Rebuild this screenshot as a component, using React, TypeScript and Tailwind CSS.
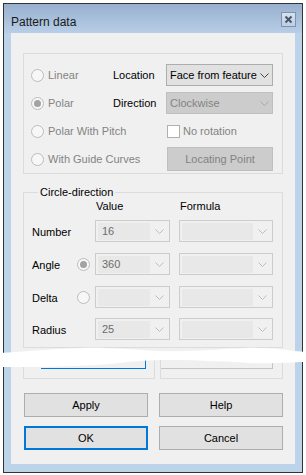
import React from "react";

function Chevron({ color = "#bdbdbd" }: { color?: string }) {
  return (
    <svg width="9" height="5" viewBox="0 0 9 5" className="shrink-0">
      <path d="M0.5 0.5 L4.5 4.5 L8.5 0.5" fill="none" stroke={color} strokeWidth="1" />
    </svg>
  );
}

function Radio({ checked = false }: { checked?: boolean }) {
  return (
    <span className="flex h-[13px] w-[13px] shrink-0 items-center justify-center rounded-full border border-[#bcbcbc] bg-[#f7f7f7]">
      {checked && <span className="h-[7px] w-[7px] rounded-full bg-[#a3a3a3]" />}
    </span>
  );
}

function Combo({ value, width }: { value?: string; width: string }) {
  return (
    <div className={`flex h-[22px] shrink-0 items-center border border-[#cccccc] bg-[#f0f0f0] py-[1px] pl-[2px] ${width}`}>
      <div className="h-[17px] flex-1 bg-[#e8e8e8] pl-[4px] leading-[16px] text-[#6d6d6d]">{value}</div>
      <div className="flex w-[19px] justify-center">
        <Chevron />
      </div>
    </div>
  );
}

function Button({ label, focused = false }: { label: string; focused?: boolean }) {
  return (
    <div
      className={`flex h-[24px] w-[124px] items-center justify-center bg-[#e1e1e1] text-black ${
        focused ? "border-2 border-[#0078d7]" : "border border-[#adadad]"
      }`}
    >
      {label}
    </div>
  );
}

export default function App() {
  const rows = [
    { label: "Number", radio: null as null | boolean, value: "16" },
    { label: "Angle", radio: true, value: "360" },
    { label: "Delta", radio: false, value: "" },
    { label: "Radius", radio: null, value: "25" },
  ];
  const rowTops = ["mt-[8px]", "mt-[11px]", "mt-[11px]", "mt-[10px]"];

  return (
    <div className="relative h-[475px] w-[306px] overflow-hidden bg-white pl-[3px] pt-[3px] font-['Liberation_Sans',Arial,sans-serif] text-[11px] leading-[14px]">
      <div className="flex h-[470px] w-[300px] flex-col border border-[#333333] bg-[#bcd3ea]">
        {/* Title bar */}
        <div className="flex h-[29px] shrink-0 items-start justify-between bg-linear-to-b from-[#98b0cf] to-[#b8cee7] pl-[7px] pr-[6px]">
          <span className="pt-[11px] text-[12px] leading-[14px] text-[#1a1a1a]">Pattern data</span>
          <div className="mt-[8px] flex h-[15px] w-[15px] items-center justify-center border border-[#7f93ad] bg-linear-to-b from-[#d6e2ef] to-[#bdcfe4]">
            <svg width="9" height="9" viewBox="0 0 9 9">
              <path d="M1.5 1.5 L7.5 7.5 M7.5 1.5 L1.5 7.5" stroke="#4a5566" strokeWidth="2" />
            </svg>
          </div>
        </div>

        {/* Client area */}
        <div className="mx-[7px] flex h-[431px] flex-col bg-[#f0f0f0] px-[12px] pt-[20px]">
          {/* Pattern type box */}
          <div className="h-[121px] border border-[#dcdcdc] pl-[7px] pt-[7px]">
            <div className="grid grid-cols-[82px_53px_107px] grid-rows-[28px_28px_28px_28px] items-center">
              <div className="flex items-center gap-[4px] text-[#838383]">
                <Radio />
                <span>Linear</span>
              </div>
              <span className="text-black">Location</span>
              <div className="flex h-[22px] items-center border border-[#adadad] bg-[#e1e1e1] pl-[3px]">
                <span className="w-[86px] whitespace-nowrap text-black">Face from feature</span>
                <div className="flex flex-1 justify-center">
                  <Chevron color="#444444" />
                </div>
              </div>

              <div className="flex items-center gap-[4px] text-[#838383]">
                <Radio checked />
                <span>Polar</span>
              </div>
              <span className="text-black">Direction</span>
              <div className="flex h-[22px] items-center border border-[#bfbfbf] bg-[#cccccc] pl-[3px]">
                <span className="w-[86px] text-[#838383]">Clockwise</span>
                <div className="flex flex-1 justify-center">
                  <Chevron color="#a8a8a8" />
                </div>
              </div>

              <div className="col-span-2 flex items-center gap-[4px] text-[#838383]">
                <Radio />
                <span>Polar With Pitch</span>
              </div>
              <div className="ml-[1px] flex items-center gap-[3px] text-[#838383]">
                <span className="h-[13px] w-[13px] border border-[#b0b0b0] bg-white" />
                <span>No rotation</span>
              </div>

              <div className="col-span-2 flex items-center gap-[4px] text-[#838383]">
                <Radio />
                <span>With Guide Curves</span>
              </div>
              <div className="ml-[1px] flex h-[24px] w-[106px] items-center justify-center border border-[#bfbfbf] bg-[#cccccc] text-[#838383]">
                Locating Point
              </div>
            </div>
          </div>

          {/* Circle-direction */}
          <fieldset className="mt-[10px] h-[164px] border border-[#dcdcdc] pl-[8px]">
            <legend className="ml-[6px] px-[2px] leading-[16px] text-black">Circle-direction</legend>
            <div className="flex h-[12px] items-center text-black">
              <span className="ml-[64px] w-[84px]">Value</span>
              <span>Formula</span>
            </div>
            {rows.map((r, i) => (
              <div key={r.label} className={`flex items-center ${rowTops[i]}`}>
                <span className="w-[45px] pt-[1px] text-black">{r.label}</span>
                <div className="w-[18px]">{r.radio !== null && <Radio checked={r.radio} />}</div>
                <Combo value={r.value} width="w-[75px]" />
                <div className="w-[9px]" />
                <Combo width="w-[94px]" />
              </div>
            ))}
          </fieldset>

          {/* Lower boxes, partly hidden */}
          <div className="mt-[4px] flex h-[27px] gap-[5px]">
            <div className="w-[132px] border border-[#dcdcdc]">
              <div className="ml-[17px] h-[16px] w-[105px] border-b border-r border-[#0078d7]" />
            </div>
            <div className="w-[123px] border border-[#dcdcdc]">
              <div className="h-[16px] w-[112px] border-b border-r border-[#c4c4c4]" />
            </div>
          </div>

          {/* Buttons */}
          <div className="mt-[14px] flex gap-[11px] pl-[1px]">
            <Button label="Apply" />
            <Button label="Help" />
          </div>
          <div className="mt-[9px] flex gap-[11px] pl-[1px]">
            <Button label="OK" focused />
            <Button label="Cancel" />
          </div>
        </div>
      </div>

      {/* torn edge of the screenshot */}
      <svg className="pointer-events-none absolute left-0 top-0" width="306" height="475" viewBox="0 0 306 475">
        <path
          d="M0 353 C 20 352, 50 349, 80 348 S 130 350, 160 351 S 220 349, 245 348 S 290 351, 306 352 L306 362 C 290 362, 270 364, 250 363 S 200 360, 170 360 S 130 362, 110 364 S 60 366, 40 367 L0 367 Z"
          fill="#ffffff"
        />
      </svg>
    </div>
  );
}
